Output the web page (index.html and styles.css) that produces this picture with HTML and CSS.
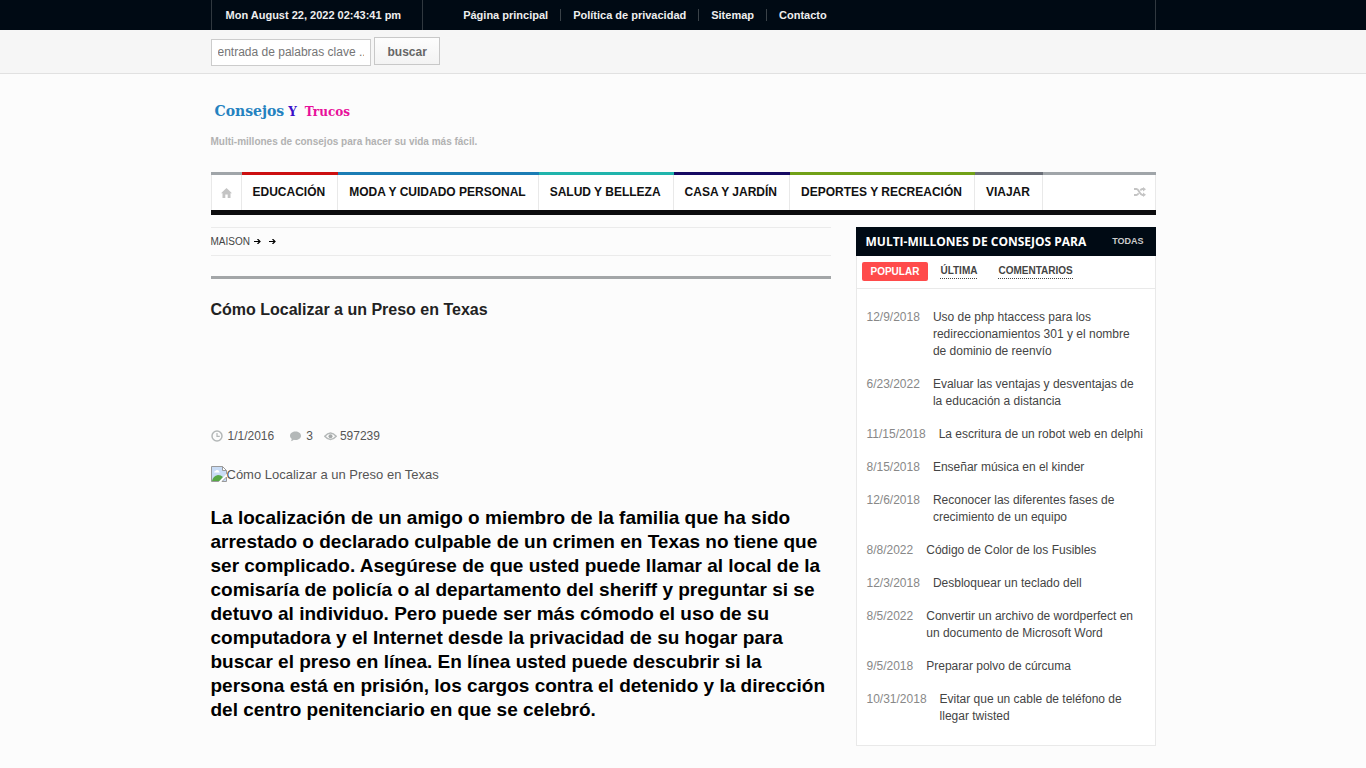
FILE: index.html
```html
<!DOCTYPE html>
<html lang="es">
<head>
<meta charset="utf-8">
<meta name="viewport" content="width=device-width, initial-scale=1">
<title>Cómo Localizar a un Preso en Texas</title>
<link rel="stylesheet" href="styles.css">
</head>
<body>
<div class="topbar">
  <div class="wrap topbar-inner">
    <time class="clock">Mon August 22, 2022 02:43:41 pm</time>
    <nav class="toplinks" aria-label="Páginas">
      <a href="#">Página principal</a>
      <a href="#">Política de privacidad</a>
      <a href="#">Sitemap</a>
      <a href="#">Contacto</a>
    </nav>
  </div>
</div>
<div class="searchbar">
  <form class="wrap search">
    <input class="search-input" type="text" aria-label="Buscar" placeholder="entrada de palabras clave ..">
    <button class="search-button" type="button">buscar</button>
  </form>
</div>
<header class="wrap header">
  <a class="logo" href="#"><span class="logo-one">Consejos</span><span class="logo-two">Y</span><span class="logo-three">Trucos</span></a>
  <p class="tagline">Multi-millones de consejos para hacer su vida más fácil.</p>
</header>
<nav class="wrap mainnav" aria-label="Principal">
  <a class="nav-home" href="#" aria-label="Inicio"><svg width="11" height="10" viewBox="0 0 11 10"><path d="M5.500 0 11 5.200H9.500V10H6.700V6.500H4.300V10H1.500V5.200H0Z" fill="#c4c4c4"/></svg></a>
  <a class="nav-item red" href="#">EDUCACIÓN</a>
  <a class="nav-item blue" href="#">MODA Y CUIDADO PERSONAL</a>
  <a class="nav-item teal" href="#">SALUD Y BELLEZA</a>
  <a class="nav-item navy" href="#">CASA Y JARDÍN</a>
  <a class="nav-item green" href="#">DEPORTES Y RECREACIÓN</a>
  <a class="nav-item slate" href="#">VIAJAR</a>
  <a class="nav-random" href="#" aria-label="Al azar"><svg width="12" height="10" viewBox="0 0 12 10"><path d="M0 2H2.500C5 2 5.500 8 8.500 8H10M0 8H2.500C3.500 8 4.100 7.200 4.600 6.300M6.300 3.500C6.900 2.500 7.500 2 8.500 2H10" fill="none" stroke="#c4c4c4" stroke-width="1.800"/><path d="M9 0 12 2.200 9 4.400ZM9 5.600 12 7.800 9 10Z" fill="#c4c4c4"/></svg></a>
</nav>
<div class="wrap columns">
  <main class="content">
    <nav class="crumbs" aria-label="Ruta">
      <a href="#">MAISON</a>
      <svg class="arrow" width="7" height="5" viewBox="0 0 7 5"><path d="M0 2.500H6M3.500 0 6 2.500 3.500 5" fill="none" stroke="#000" stroke-width="1.200"/></svg>
      <svg class="arrow" width="7" height="5" viewBox="0 0 7 5"><path d="M0 2.500H6M3.500 0 6 2.500 3.500 5" fill="none" stroke="#000" stroke-width="1.200"/></svg>
    </nav>
    <article class="article">
      <h1 class="title">Cómo Localizar a un Preso en Texas</h1>
      <div class="meta">
        <span class="meta-item date"><svg width="12" height="12" viewBox="0 0 12 12" fill="none" stroke="#b4b8b8"><circle cx="6" cy="6" r="5" stroke-width="1.500"/><path d="M6 3V6.300H8.800" stroke-width="1.200"/></svg>1/1/2016</span>
        <span class="meta-item comments"><svg width="12" height="12" viewBox="0 0 12 12" fill="#b4b8b8"><path d="M6.500 1.500C9.500 1.500 12 3.300 12 5.800S9.500 10 6.500 10C5.900 10 5.400 9.900 4.900 9.800 4 10.700 2.800 11.200 1.800 11.200 2.500 10.600 2.700 9.600 2.600 8.800 1.600 8 1 7 1 5.800 1 3.300 3.500 1.500 6.500 1.500Z"/></svg>3</span>
        <span class="meta-item"><svg width="13" height="12" viewBox="0 0 13 12"><path d="M.8 6.200Q6.500-.3 12.200 6.200 6.500 12.700.8 6.200Z" fill="none" stroke="#b4b8b8" stroke-width="1.500"/><circle cx="6.500" cy="6.200" r="2" fill="#a5a9a9"/></svg>597239</span>
      </div>
      <p class="picture"><svg width="16" height="16" viewBox="0 0 16 16" aria-hidden="true"><path d="M.5.500H11.500L15.500 4.500V9L9 15.500H.5Z" fill="#c9dcf5" stroke="#9a9a9a"/><path d="M3 6.500Q3 5 4.500 5 5 3.500 6.500 4 8 4 8 5.500 9 6 8.500 6.500Z" fill="#fff"/><path d="M1 15Q2 10 7 9 10 9 12 11L8.500 15Z" fill="#57a845"/><path d="M11.500.500V4.500H15.500Z" fill="#fff" stroke="#9a9a9a"/><path d="M7.500 16 16 7.500V10L10 16Z" fill="#fff"/><path d="M11 15.500H15.500V11Z" fill="#c9dcf5" stroke="#9a9a9a"/></svg>Cómo Localizar a un Preso en Texas</p>
      <p class="lead">La localización de un amigo o miembro de la familia que ha sido arrestado o declarado culpable de un crimen en Texas no tiene que ser complicado. Asegúrese de que usted puede llamar al local de la comisaría de policía o al departamento del sheriff y preguntar si se detuvo al individuo. Pero puede ser más cómodo el uso de su computadora y el Internet desde la privacidad de su hogar para buscar el preso en línea. En línea usted puede descubrir si la persona está en prisión, los cargos contra el detenido y la dirección del centro penitenciario en que se celebró.</p>
    </article>
  </main>
  <aside class="sidebar">
    <div class="side-head"><h2>MULTI-MILLONES DE CONSEJOS PARA</h2><a href="#">TODAS</a></div>
    <div class="tabs">
      <button class="tab active" type="button">POPULAR</button>
      <button class="tab" type="button"><span>ÚLTIMA</span></button>
      <button class="tab" type="button"><span>COMENTARIOS</span></button>
    </div>
    <ul class="posts">
      <li><time>12/9/2018</time><a href="#">Uso de php htaccess para los redireccionamientos 301 y el nombre de dominio de reenvío</a></li>
      <li><time>6/23/2022</time><a href="#">Evaluar las ventajas y desventajas de la educación a distancia</a></li>
      <li><time>11/15/2018</time><a href="#">La escritura de un robot web en delphi</a></li>
      <li><time>8/15/2018</time><a href="#">Enseñar música en el kinder</a></li>
      <li><time>12/6/2018</time><a href="#">Reconocer las diferentes fases de crecimiento de un equipo</a></li>
      <li><time>8/8/2022</time><a href="#">Código de Color de los Fusibles</a></li>
      <li><time>12/3/2018</time><a href="#">Desbloquear un teclado dell</a></li>
      <li><time>8/5/2022</time><a href="#">Convertir un archivo de wordperfect en un documento de Microsoft Word</a></li>
      <li><time>9/5/2018</time><a href="#">Preparar polvo de cúrcuma</a></li>
      <li><time>10/31/2018</time><a href="#">Evitar que un cable de teléfono de llegar twisted</a></li>
    </ul>
  </aside>
</div>
</body>
</html>
```
FILE: styles.css
```css
* { box-sizing: border-box; }
body {
  margin: 0;
  background: #fcfcfc;
  color: #555;
  font: 12px/17px "Liberation Sans", Arial, sans-serif;
}
a { color: inherit; text-decoration: none; }
h1, h2, p, ul { margin: 0; padding: 0; }
svg { display: block; flex: none; }
.wrap { max-width: 945px; margin: 0 auto; }

.topbar { background: #000a14; color: #eee; font-size: 11px; font-weight: bold; line-height: 30px; }
.topbar-inner { display: flex; border: solid #30383f; border-width: 0 1px; }
.clock { padding: 0 21px 0 14px; border-right: 1px solid #30383f; }
.toplinks { display: flex; align-items: center; padding-left: 28px; }
.toplinks a { padding: 0 12px; line-height: 12px; border-left: 1px solid #3a4248; }
.toplinks a:first-child { border-left: 0; }

.searchbar { background: #f6f6f6; border-bottom: 1px solid #e1e1e1; padding: 7px 0; }
.search { display: flex; gap: 3px; align-items: flex-start; }
.search-input {
  width: 160px; height: 27px; margin-top: 2px; padding: 0 6px 2px;
  border: 1px solid #ccc; background: #fff; color: #666;
  font: 12px "Liberation Sans", Arial, sans-serif;
}
.search-input::placeholder { color: #757575; opacity: 1; }
.search-button {
  height: 28px; padding: 1px 12px 0 13px;
  border: 1px solid #c8c8c8; background: linear-gradient(#fdfdfd, #f3f3f3);
  color: #666; font: bold 12px "Liberation Sans", Arial, sans-serif;
}

.header { padding: 27px 0 22px; }
.logo { display: flex; align-items: baseline; gap: 4px; padding-left: 4px; font: bold 14px/20px "DejaVu Serif", serif; }
.logo-one { color: #2482c0; }
.logo-two { color: #3a10c8; font-size: 12px; }
.logo-three { margin-left: 4px; color: #e8109a; font-size: 12px; }
.tagline { margin-top: 11px; color: #b2b2b2; font-size: 10px; font-weight: bold; }

.mainnav {
  display: flex;
  background: #fff;
  border: solid #a0a5a9; border-width: 3px 0 5px;
  border-bottom-color: #0c0c0e;
  color: #111; font-weight: bold; line-height: 35px;
}
.nav-home { width: 31px; padding: 13px 0 0 9px; border: solid #e9e9e9; border-width: 0 1px; }
.nav-item { margin-top: -3px; padding: 0 13px 0 11px; border-top: 3px solid; background: linear-gradient(#e9e9e9, #e9e9e9) right / 1px 100% no-repeat; }
.red { border-top-color: #cc0f10; }
.blue { border-top-color: #1b7db5; }
.teal { border-top-color: #20b4ac; }
.navy { border-top-color: #160a63; }
.green { border-top-color: #71a118; }
.slate { border-top-color: #6b6f78; }
.nav-random { margin-left: auto; padding: 12px 9px 0; border-right: 1px solid #e9e9e9; }

.columns { display: flex; gap: 25px; padding-top: 12px; align-items: flex-start; }
.content { flex: 1; min-width: 0; }
.crumbs {
  display: flex; align-items: center; gap: 4px; height: 29px;
  border: solid #ebebeb; border-width: 1px 0; color: #444; font-size: 10px;
}
.arrow + .arrow { margin-left: 4px; }
.article { margin-top: 20px; padding-top: 23px; border-top: 3px solid #a3a6a8; }
.title { color: #222; font-size: 16px; line-height: 16px; }
.meta { display: flex; margin-top: 110px; line-height: 16px; }
.meta-item { display: flex; align-items: center; gap: 5px; }
.date { margin-right: 15px; }
.comments { margin-right: 11px; }
.meta-item:last-child { gap: 3px; }
.picture { display: flex; align-items: flex-start; margin-top: 22px; font-size: 13px; line-height: 18px; }
.lead { margin-top: 22px; color: #000; font-size: 19px; font-weight: bold; line-height: 24px; }

.sidebar { width: 300px; border: solid #e9e9e9; border-width: 0 1px 1px; background: #fff; }
.side-head {
  display: flex; justify-content: space-between; margin: 0 -1px; padding: 0 12px 0 10px;
  background: #000a14; line-height: 29px;
}
.side-head h2 { color: #fff; font: bold 12px/29px "Open Sans", sans-serif; }
.side-head a { color: #ccc; font-size: 9px; font-weight: bold; }
.tabs { display: flex; gap: 3px; padding: 6px 5px 7px; border-bottom: 1px solid #e9e9e9; }
.tab {
  padding: 0 9px; border: 0; border-radius: 2px; background: none; color: #444;
  font: bold 10px/19px "Liberation Sans", Arial, sans-serif;
}
.tab span { display: block; line-height: 14px; border-bottom: 1px dotted #444; }
.tab.active { background: #ff4b4b; color: #fff; }
.posts { display: flex; flex-direction: column; gap: 16px; padding: 20px 10px; list-style: none; }
.posts li { display: flex; gap: 13px; }
.posts time { color: #888; }
.posts a { color: #444; }

@media (max-width: 945px) {
  .mainnav, .topbar-inner { flex-wrap: wrap; }
  .columns { flex-direction: column; }
}
```
